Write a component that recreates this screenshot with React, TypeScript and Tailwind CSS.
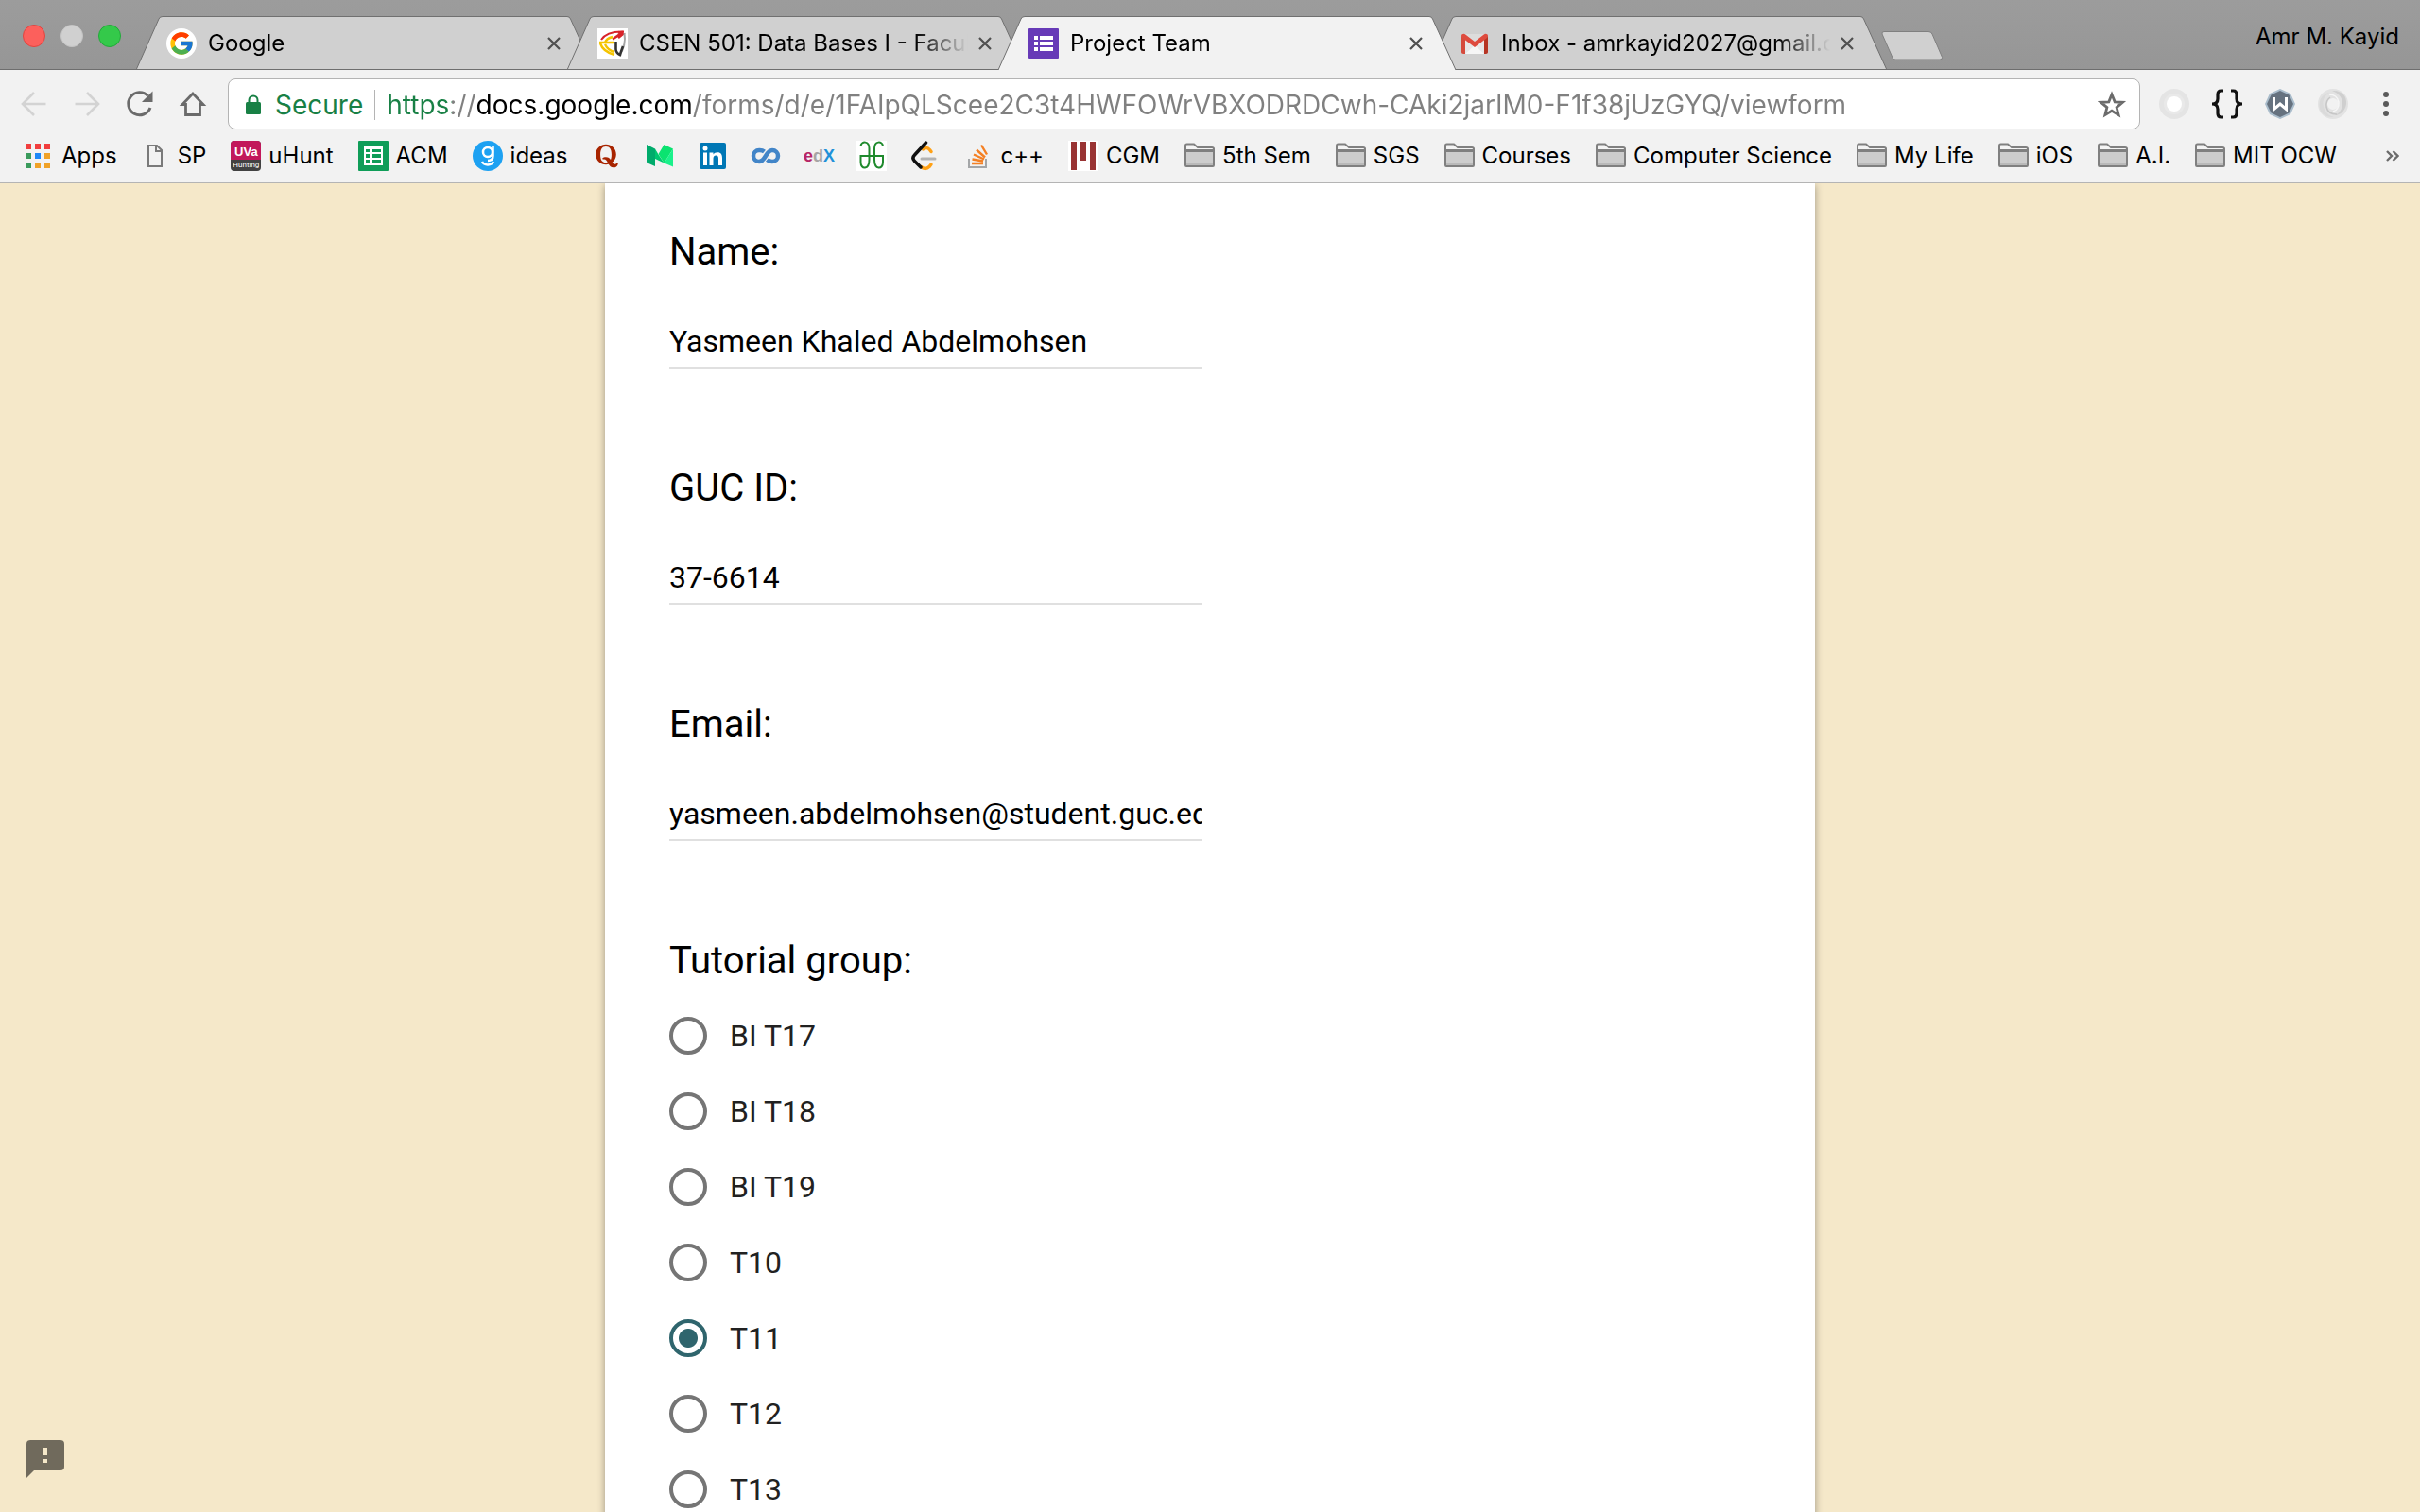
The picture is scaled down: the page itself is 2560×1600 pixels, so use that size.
import React, { useState } from "react";
import { FcGoogle } from "react-icons/fc";
import { FaQuora } from "react-icons/fa";

/* ---------- site icons, all drawn on a 32 unit grid ---------- */

const box = "block size-8 shrink-0";

function GoogleIcon() {
  return (
    <span className="flex size-8 shrink-0 items-center justify-center rounded-full bg-white">
      <FcGoogle className="size-7" />
    </span>
  );
}

function GucIcon() {
  return (
    <svg viewBox="0 0 32 32" className={box} fill="none" aria-hidden="true">
      <rect width="32" height="32" fill="#fff" />
      <path d="M4 12C8 6 17 3 28 3.500" stroke="#d8232a" strokeWidth="2" />
      <path d="M27 3.500C24 6 20 9 16 11.500M22 4l5 2-5 4" stroke="#d8232a" strokeWidth="2.600" />
      <path d="M2 15h15M3 16c2 6 8 10 15 12M8 15c1-3 4-5 8-6M8 17c2 4 6 7 10 8" stroke="#f5c400" strokeWidth="2.400" />
      <path d="M28.500 5C30 14 28 22 23 29" stroke="#a5a5a5" strokeWidth="2" />
      <path d="M19.500 14v8c0 3 2 5 4.500 6 1-4 2-6 3-9" stroke="#333" strokeWidth="2.600" />
    </svg>
  );
}

function FormsIcon() {
  return (
    <svg viewBox="0 0 32 32" className={box} aria-hidden="true">
      <rect width="32" height="32" rx="1" fill="#673ab7" />
      <path fill="#fff" d="M6 8h4v4H6zM12 8h14v4H12zM6 14h4v4H6zM12 14h14v4H12zM6 20h4v4H6zM12 20h14v4H12z" />
    </svg>
  );
}

function GmailIcon() {
  return (
    <svg viewBox="0 0 32 32" className={box} aria-hidden="true">
      <path d="M3 6h26v21H3z" fill="#e8e8e8" />
      <path d="M6 27l10-9 10 9z" fill="#f6f6f6" />
      <path d="M6 6h20l-10 8z" fill="#dcdcdc" />
      <path d="M2 8v17c0 1.200.8 2 2 2h2V11z" fill="#d54b3d" />
      <path d="M30 8v17c0 1.200-.8 2-2 2h-2V11z" fill="#b63524" />
      <path d="M2 8c0-2 2.500-3 4.300-1.600L16 14l9.700-7.600C27.500 5 30 6 30 8c0 1-.4 1.700-1.200 2.300L16 20 3.200 10.300C2.400 9.700 2 9 2 8z" fill="#de4b3e" />
    </svg>
  );
}

function AppsIcon() {
  return (
    <svg viewBox="0 0 26 26" className="block size-[26px] shrink-0" aria-hidden="true">
      <path fill="#f13e3e" d="M0 0h6v6H0zM10 0h6v6h-6zM20 0h6v6h-6z" />
      <path fill="#3a9b5c" d="M0 10h6v6H0zM0 20h6v6H0z" />
      <path fill="#1e88f7" d="M10 10h6v6h-6z" />
      <path fill="#f0a227" d="M20 10h6v6h-6zM10 20h6v6h-6zM20 20h6v6h-6z" />
    </svg>
  );
}

function PageIcon() {
  return (
    <svg viewBox="0 0 32 32" className={box} fill="none" stroke="#7a7a7a" strokeWidth="2" aria-hidden="true">
      <path d="M9 5h9l5 5v17H9zM17 5v6h6" />
    </svg>
  );
}

function UvaIcon() {
  return (
    <span className="flex size-8 shrink-0 flex-col overflow-hidden rounded bg-[#424242] text-center text-white" aria-hidden="true">
      <span className="h-5 bg-[#c2185b] font-['Liberation_Sans'] text-[13px] leading-6 font-bold">UVa</span>
      <span className="font-['Roboto'] text-[8px] leading-3">Hunting</span>
    </span>
  );
}

function SheetsIcon() {
  return (
    <svg viewBox="0 0 32 32" className={box} aria-hidden="true">
      <rect width="32" height="32" rx="1" fill="#0f9d58" />
      <path fill="#fff" d="M6 6h20v20H6z" />
      <path fill="#0f9d58" d="M8 9h4v3H8zM14 9h10v3H14zM8 14h4v4H8zM14 14h10v4H14zM8 20h4v4H8zM14 20h10v4H14z" />
    </svg>
  );
}

function GIcon() {
  return (
    <svg viewBox="0 0 32 32" className={box} fill="none" aria-hidden="true">
      <circle cx="16" cy="16" r="16" fill="#1da1f2" />
      <circle cx="16" cy="12" r="5" stroke="#fff" strokeWidth="2.500" />
      <path d="M21.500 6v10c0 3-2 5-5.500 5M10 22c2 4.500 10 4.500 12 0" stroke="#fff" strokeWidth="2.500" />
    </svg>
  );
}

function QuoraIcon() {
  return (
    <span className="flex size-8 shrink-0 items-center justify-center">
      <FaQuora className="size-7 text-[#a82400]" />
    </span>
  );
}

function MediumIcon() {
  return (
    <svg viewBox="0 0 32 32" className={box} aria-hidden="true">
      <path fill="#00ab6b" d="M2 4l9 4.500v18.500l-8-3.500c-.6-.3-1-.8-1-1.500z" />
      <path fill="#00c771" d="M11 8.500l3.500 6L20.500 23.500 11 19z" />
      <path fill="#0be370" d="M20.500 4L30 8.500 20.500 23.500 14.500 14z" />
      <path fill="#1af18b" d="M30 8.500v19l-9.500-4z" />
    </svg>
  );
}

function LinkedinIcon() {
  return (
    <svg viewBox="0 0 32 32" className={box} aria-hidden="true">
      <rect x="2" y="2" width="28" height="28" rx="2" fill="#0077b5" />
      <circle cx="8" cy="8" r="2.500" fill="#fff" />
      <path fill="#fff" d="M6 12.500h4V26H6zM12.500 12.500h4v2c1-1.600 2.500-2.300 4.500-2.300 4 0 5 2.600 5 6.300V26h-4v-6.800c0-1.800-.2-3.700-2.500-3.700s-3 1.800-3 3.600V26h-4z" />
    </svg>
  );
}

function CourseraIcon() {
  return (
    <svg viewBox="0 0 32 32" className={box} fill="none" stroke="#4285c8" strokeWidth="4.500" aria-hidden="true">
      <path d="M14.500 11.500C12.500 9.800 10.500 10 9 10a6 6 0 0 0 0 12c7 0 7-12 14-12a6 6 0 0 1 0 12c-2 0-4-.6-5.500-2" />
    </svg>
  );
}

function EdxIcon() {
  return (
    <span className="flex size-8 shrink-0 items-center justify-center font-['Liberation_Sans'] text-[18px] leading-none font-bold" aria-hidden="true">
      <span className="text-[#b72667]">e</span>
      <span className="text-[#a7a4a4]">d</span>
      <span className="text-[#1f91d9]">X</span>
    </span>
  );
}

function GfgIcon() {
  return (
    <svg viewBox="0 0 32 32" className={box} fill="none" aria-hidden="true">
      <rect width="32" height="32" fill="#fff" />
      <path
        d="M4.500 5c1-5 9-5 9 3v12c0 11-9 11-9 2.500V16H28v6.500c0 8.500-9 8.500-9-2.500V8c0-8 8-8 9-3"
        stroke="#1f8a2d"
        strokeWidth="2"
      />
    </svg>
  );
}

function LeetcodeIcon() {
  return (
    <svg viewBox="0 0 32 32" className={box} fill="none" strokeWidth="3.500" strokeLinecap="round" aria-hidden="true">
      <path d="M14.500 9c2.500-2 5-2 7 .5l1.500 2M23 25l-2 2.500c-2.500 2.500-6 2.500-8.500 0" stroke="#ffa116" />
      <path d="M13 19h14" stroke="#b3b3b3" strokeWidth="3" />
      <path d="M17.500 2L5.500 15c-2 2-2 4.500 0 6.500l6.500 6.500" stroke="#111" />
    </svg>
  );
}

function StackIcon() {
  return (
    <svg viewBox="0 0 32 32" className={box} fill="none" aria-hidden="true">
      <path d="M7 19v9h18v-9" stroke="#a4a6a8" strokeWidth="2" />
      <path d="M10 24h12M10.500 19.500l11.500 2M12 14.500l11 5M15 9.500l9 8M20 4.500l6 10" stroke="#f48024" strokeWidth="2.400" />
    </svg>
  );
}

function CgmIcon() {
  return (
    <svg viewBox="0 0 32 32" className={box} aria-hidden="true">
      <rect width="32" height="32" fill="#fff" />
      <path fill="#993333" d="M3 1h6v30H3zM13 1h6v20h-6zM23 1h6v30h-6z" />
    </svg>
  );
}

function FolderIcon() {
  return (
    <svg viewBox="0 0 32 32" className={box} strokeWidth="2" aria-hidden="true">
      <path d="M1 10V5c0-1 .5-1.500 1.500-1.500H10l4 3.500h15c1 0 2 .6 2 1.500V10z" fill="#f4f4f4" stroke="#808080" />
      <path d="M1 11h30v15c0 .6-.4 1-1 1H2c-.6 0-1-.4-1-1z" fill="#cdcdcd" stroke="#808080" />
      <path d="M2 25h28" stroke="#b9b9b9" />
    </svg>
  );
}

/* ---------- window top: tabs ---------- */

type TabInfo = { title: string; icon: React.ReactNode; active?: boolean };

const tabs: TabInfo[] = [
  { title: "Google", icon: <GoogleIcon /> },
  { title: "CSEN 501: Data Bases I - Faculty", icon: <GucIcon /> },
  { title: "Project Team", icon: <FormsIcon />, active: true },
  { title: "Inbox - amrkayid2027@gmail.com", icon: <GmailIcon /> },
];

function Tab({ title, icon, active }: TabInfo) {
  return (
    <div className={`relative -ml-7 h-[57px] w-[484px] ${active ? "z-10" : ""}`}>
      <svg
        viewBox="0 0 484 57"
        preserveAspectRatio="none"
        className="absolute inset-0 size-full"
        aria-hidden="true"
      >
        <path
          d="M0 57L24 3Q25 .5 28 .5H456Q458.500 .5 459.500 3L484 57z"
          fill={active ? "#f2f2f2" : "#d0d0d0"}
        />
        <path
          d="M0 57L24 3Q25 .5 28 .5H456Q458.500 .5 459.500 3L484 57"
          fill="none"
          stroke="#707070"
        />
        {!active && <path d="M0 56.500H484" stroke="#6e6e6e" />}
      </svg>
      <div className="relative flex h-full items-center pr-8 pl-8">
        {icon}
        <button
          type="button"
          role="tab"
          aria-selected={!!active}
          className="ml-3 min-w-0 flex-1 overflow-hidden mask-[linear-gradient(to_right,black_calc(100%-56px),transparent)] text-left text-[24px] leading-8 whitespace-nowrap"
        >
          {title}
        </button>
        <button type="button" aria-label={`Close ${title}`} className="ml-2 size-5 p-[3px]">
          <svg viewBox="0 0 14 14" className="block size-[14px]" stroke="#505050" strokeWidth="2.200">
            <path d="M1 1l12 12M13 1L1 13" />
          </svg>
        </button>
      </div>
    </div>
  );
}

function TabStrip() {
  return (
    <div className="flex h-[74px] items-end justify-between border-b border-[#6e6e6e] bg-linear-to-b from-[#9c9c9c] to-[#969696]">
      <div className="flex h-full items-end">
        <div className="flex w-[172px] items-center gap-4 self-center pt-0.5 pl-6">
          <button type="button" aria-label="Close window" className="size-6 rounded-full border border-[#e2443f] bg-[#fc605c]" />
          <button type="button" aria-label="Minimize window" className="size-6 rounded-full border border-[#c4c4c4] bg-[#d0d0d0]" />
          <button type="button" aria-label="Zoom window" className="size-6 rounded-full border border-[#23a93a] bg-[#34c94a]" />
        </div>
        <div role="tablist" className="-mb-px flex">
          {tabs.map((t) => (
            <Tab key={t.title} {...t} />
          ))}
        </div>
        <button type="button" aria-label="New tab" className="-ml-1.5 mb-[9px]">
          <svg viewBox="0 0 66 32" className="block h-8 w-[66px]">
            <path d="M3 1.500H50Q53 1.500 54 4L64.500 28.500Q65 31 62 31H15Q13 31 12 29L1 4Q.5 1.500 3 1.500z" fill="#d0d0d0" stroke="#808080" />
          </svg>
        </button>
      </div>
      <button type="button" className="mr-[22px] self-center pt-1 text-[24px] leading-8">
        Amr M. Kayid
      </button>
    </div>
  );
}

/* ---------- toolbar ---------- */

function ToolButton({ label, children }: { label: string; children: React.ReactNode }) {
  return (
    <button type="button" aria-label={label} className="flex h-10 w-14 shrink-0 items-center justify-center">
      <svg viewBox="0 0 32 32" className={box} fill="none">
        {children}
      </svg>
    </button>
  );
}

function Toolbar() {
  const [url, setUrl] = useState(
    "https://docs.google.com/forms/d/e/1FAIpQLScee2C3t4HWFOWrVBXODRDCwh-CAki2jarIM0-F1f38jUzGYQ/viewform",
  );
  return (
    <div className="flex items-center pt-[9px] pr-2 pl-2">
      <ToolButton label="Back">
        <path d="M28.500 16H4.500M16 4L4 16l12 12" stroke="#d3d3d3" strokeWidth="2.600" />
      </ToolButton>
      <ToolButton label="Forward">
        <path d="M3.500 16h24M16 4l12 12-12 12" stroke="#d3d3d3" strokeWidth="2.600" />
      </ToolButton>
      <ToolButton label="Reload">
        <path d="M27 20A12 12 0 1 1 24.500 7.500" stroke="#6b6b6b" strokeWidth="3" />
        <path d="M29.500 2.500V14H18z" fill="#6b6b6b" />
      </ToolButton>
      <ToolButton label="Home">
        <path d="M16 5L5 16.500h3.500V27.500h15V16.500H27z" stroke="#6b6b6b" strokeWidth="2.800" />
      </ToolButton>
      <div className="ml-[9px] flex h-[54px] min-w-0 flex-1 items-center rounded-lg border border-[#b4b4b4] bg-white pt-0.5 pr-3 pl-[17px] text-[28px] leading-9">
        <svg viewBox="0 0 18 22" className="block h-[22px] w-[18px] shrink-0" fill="none" aria-hidden="true">
          <rect x="1" y="8" width="16" height="13" rx="1.500" fill="#188045" />
          <path d="M4.500 9V6a4.500 4.500 0 0 1 9 0v3" stroke="#188045" strokeWidth="2" />
        </svg>
        <span className="ml-3.5 text-[#188045]">Secure</span>
        <span className="ml-3 h-8 w-px bg-[#b4b4b4]" />
        <input
          aria-label="Address"
          value={url}
          onChange={(e) => setUrl(e.target.value)}
          className="ml-3 min-w-0 flex-1 bg-[linear-gradient(to_right,#188045_0_69px,#808080_69px_96px,#000_96px_323px,#808080_323px)] bg-clip-text text-transparent outline-none"
        />
        <button type="button" aria-label="Bookmark this page">
          <svg viewBox="0 0 32 32" className={box} fill="none" stroke="#6b6b6b" strokeWidth="2.800">
            <path d="M15 5l3.200 7.800 8.300.5-6.400 5.300 2 8L15 22.200l-7.100 4.400 2-8-6.400-5.300 8.300-.5z" />
          </svg>
        </button>
      </div>
      <div className="ml-2 flex">
        <ToolButton label="Screen recorder extension">
          <circle cx="16" cy="16" r="16" fill="#e4e4e4" />
          <circle cx="16" cy="16" r="11" fill="#e9e9e9" />
          <circle cx="16" cy="16" r="8" fill="#fff" />
        </ToolButton>
        <ToolButton label="JSON extension">
          <path
            d="M12 2H9.500C6.500 2 6 4 6 6v4.500C6 14 4.500 16 0 16c4.500 0 6 2 6 5.500V26c0 2 .5 4 3.500 4H12M20 2h2.500C25.500 2 26 4 26 6v4.500c0 3.500 1.500 5.500 6 5.500-4.500 0-6 2-6 5.500V26c0 2-.5 4-3.500 4H20"
            stroke="#111"
            strokeWidth="3.200"
          />
        </ToolButton>
        <ToolButton label="Wappalyzer extension">
          <path d="M16 0l11 5 5 11-5 11-11 5-11-5L0 16 5 5z" fill="#a9bccb" />
          <path d="M16 2l9.500 4.500L30 16l-4.500 9.500L16 30l-9.500-4.500L2 16l4.500-9.500z" fill="#66727f" />
          <path d="M9.500 9v12.500l6.500-5.500 6.500 5.500V9" stroke="#fff" strokeWidth="3" />
        </ToolButton>
        <ToolButton label="Refresh extension">
          <circle cx="16" cy="16" r="11" stroke="#e2e2e2" strokeWidth="10" />
          <path d="M15 2c10-1 16 6 15 14-1 7-6 12-12 12 5-2 8-7 8-13S21 4 15 2z" fill="#cfcfcf" />
          <path d="M17 30C8 31 1 25 1.500 16 2 9 7 5 12 4c-4 3-7 7-6.500 12S9 28 17 30z" fill="#dadada" />
          <path d="M12 6c5 0 9 3 10 8 .5 5-2 9-6 10" stroke="#f6f6f6" strokeWidth="1.500" />
          <path d="M20 27c-6 0-10-3-11-8-.5-4 1-8 4-10" stroke="#c6c6c6" strokeWidth="1.500" />
        </ToolButton>
        <ToolButton label="Menu">
          <circle cx="16" cy="6" r="3" fill="#5a5a5a" />
          <circle cx="16" cy="16" r="3" fill="#5a5a5a" />
          <circle cx="16" cy="26" r="3" fill="#5a5a5a" />
        </ToolButton>
      </div>
    </div>
  );
}

/* ---------- bookmarks ---------- */

type Bookmark = { name: string; icon: React.ReactNode; iconOnly?: boolean };

const bookmarks: Bookmark[] = [
  { name: "SP", icon: <PageIcon /> },
  { name: "uHunt", icon: <UvaIcon /> },
  { name: "ACM", icon: <SheetsIcon /> },
  { name: "ideas", icon: <GIcon /> },
  { name: "Quora", icon: <QuoraIcon />, iconOnly: true },
  { name: "Medium", icon: <MediumIcon />, iconOnly: true },
  { name: "LinkedIn", icon: <LinkedinIcon />, iconOnly: true },
  { name: "Coursera", icon: <CourseraIcon />, iconOnly: true },
  { name: "edX", icon: <EdxIcon />, iconOnly: true },
  { name: "GeeksforGeeks", icon: <GfgIcon />, iconOnly: true },
  { name: "LeetCode", icon: <LeetcodeIcon />, iconOnly: true },
  { name: "c++", icon: <StackIcon /> },
  { name: "CGM", icon: <CgmIcon /> },
  { name: "5th Sem", icon: <FolderIcon /> },
  { name: "SGS", icon: <FolderIcon /> },
  { name: "Courses", icon: <FolderIcon /> },
  { name: "Computer Science", icon: <FolderIcon /> },
  { name: "My Life", icon: <FolderIcon /> },
  { name: "iOS", icon: <FolderIcon /> },
  { name: "A.I.", icon: <FolderIcon /> },
  { name: "MIT OCW", icon: <FolderIcon /> },
];

function BookmarksBar() {
  return (
    <nav aria-label="Bookmarks" className="flex items-center pr-[22px] pl-[27px] text-[24px] leading-[56px]">
      <a href="#apps" className="mr-6 flex items-center gap-3">
        <AppsIcon />
        Apps
      </a>
      <div className="flex min-w-0 flex-1 gap-6 overflow-hidden whitespace-nowrap">
        {bookmarks.map((b) => (
          <a key={b.name} href="#bookmark" aria-label={b.name} className="flex shrink-0 items-center gap-2">
            {b.icon}
            {!b.iconOnly && <span className="pr-0.5">{b.name}</span>}
          </a>
        ))}
      </div>
      <button type="button" aria-label="More bookmarks">
        <svg viewBox="0 0 14 12" className="block h-3 w-[14px]" fill="none" stroke="#6b6b6b" strokeWidth="2.400">
          <path d="M1 1l5 5-5 5M7.500 1l5 5-5 5" />
        </svg>
      </button>
    </nav>
  );
}

/* ---------- form ---------- */

function TextQuestion({ id, label, initial }: { id: string; label: string; initial: string }) {
  const [value, setValue] = useState(initial);
  return (
    <div className="flex h-[250px] flex-col">
      <label htmlFor={id} className="text-[40px] leading-[54px]">
        {label}
      </label>
      <input
        id={id}
        value={value}
        onChange={(e) => setValue(e.target.value)}
        className="mt-10 h-14 w-[564px] border-b-2 border-[#e0e0e0] bg-transparent text-[32px] outline-none"
      />
    </div>
  );
}

const groups = ["BI T17", "BI T18", "BI T19", "T10", "T11", "T12", "T13"];

function Form() {
  const [group, setGroup] = useState("T11");
  return (
    <form className="min-h-full w-[1280px] shrink-0 bg-white px-[68px] pt-[46px] pb-10 font-['Roboto',sans-serif] text-black shadow-[0_2px_8px_rgba(0,0,0,0.37)]">
      <TextQuestion id="name" label="Name:" initial="Yasmeen Khaled Abdelmohsen" />
      <TextQuestion id="guc-id" label="GUC ID:" initial="37-6614" />
      <TextQuestion id="email" label="Email:" initial="yasmeen.abdelmohsen@student.guc.edu.eg" />
      <fieldset>
        <legend className="text-[40px] leading-[54px]">Tutorial group:</legend>
        <div className="flex flex-col gap-10 pt-[32px]">
          {groups.map((g) => (
            <label key={g} className="flex h-10 items-center gap-6 text-[32px] text-[#212121]">
              <input
                type="radio"
                name="group"
                checked={group === g}
                onChange={() => setGroup(g)}
                className="size-10 appearance-none rounded-full border-4 border-[#757575] checked:border-[#2f656d] checked:bg-[radial-gradient(circle,#2f656d_0_9.5px,transparent_10.5px)]"
              />
              {g}
            </label>
          ))}
        </div>
      </fieldset>
    </form>
  );
}

export default function App() {
  return (
    <div className="flex h-screen flex-col overflow-hidden font-['Inter',sans-serif] text-black">
      <header className="shrink-0 border-b border-[#b4b4b4] bg-[#f2f2f2]">
        <TabStrip />
        <Toolbar />
        <BookmarksBar />
      </header>
      <main className="relative flex min-h-0 flex-1 items-start justify-center overflow-hidden bg-[#f5e8c9]">
        <Form />
        <button type="button" aria-label="Report a problem" className="absolute bottom-9 left-7">
          <svg viewBox="0 0 40 40" className="block size-10">
            <path
              fillRule="evenodd"
              fill="#706a5c"
              d="M4 0h32a4 4 0 0 1 4 4v24a4 4 0 0 1-4 4H8l-8 8V4a4 4 0 0 1 4-4zM18 8v8h4V8zM18 20v4h4v-4z"
            />
          </svg>
        </button>
      </main>
    </div>
  );
}
